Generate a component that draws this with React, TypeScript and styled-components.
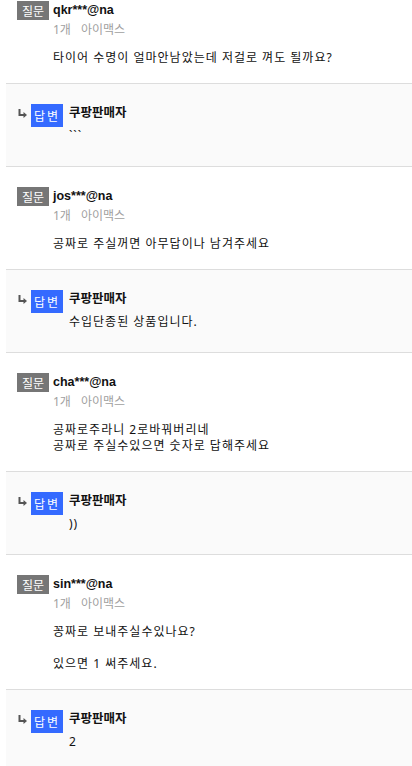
import styled, { createGlobalStyle } from "styled-components";

const GlobalStyle = createGlobalStyle`
  body {
    margin: 0;
    background: #fff;
    font-family: "Noto Sans", "Noto Sans CJK KR", sans-serif;
    color: #111;
  }
`;

const List = styled.div`
  margin-left: 6px;
  margin-top: -20px;
`;

const Question = styled.div`
  display: flex;
  border-top: 1px solid #dddddd;
  padding: 20px 0 17px 11px;
`;

const Answer = styled.div`
  display: flex;
  align-items: flex-start;
  border-top: 1px solid #dddddd;
  background: #fafafa;
  padding: 20px 0 22px 11px;
`;

const Badge = styled.span<{ $kind: "q" | "a" }>`
  flex: none;
  width: 32px;
  height: ${(p) => (p.$kind === "q" ? 19 : 23)}px;
  display: flex;
  align-items: center;
  justify-content: center;
  background: ${(p) => (p.$kind === "q" ? "#767676" : "#346aff")};
  color: #fff;
  font-size: 12px;
  letter-spacing: ${(p) => (p.$kind === "a" ? 2 : 0)}px;
`;

const Body = styled.div<{ $gap: number }>`
  margin-left: ${(p) => p.$gap}px;
  display: flex;
  flex-direction: column;
`;

const Writer = styled.div`
  font-family: "Liberation Sans", "Noto Sans CJK KR", sans-serif;
  font-size: 12.5px;
  font-weight: 700;
  line-height: 19px;
  color: #111;
`;

const Meta = styled.div`
  font-size: 12px;
  line-height: 16px;
  color: #a0a0a0;
  margin-top: 2px;

  span + span {
    margin-left: 10px;
  }
`;

const Text = styled.p<{ $top: number }>`
  margin: ${(p) => p.$top}px 0 0;
  font-size: 12px;
  letter-spacing: 1px;
  line-height: 16px;
  color: #111;
  white-space: pre-line;
`;

const Arrow = styled.svg`
  flex: none;
  width: 9px;
  height: 9px;
  margin: 5px 4px 0 1px;
`;

const ReplyArrow = () => (
  <Arrow viewBox="0 0 9 9">
    <path d="M1.5 0 V6 H6" stroke="#555" strokeWidth="2" fill="none" />
    <path d="M5.5 3 L9 6 L5.5 9 Z" fill="#555" />
  </Arrow>
);

type Item = { user: string; question: string; answer: string };

const items: Item[] = [
  {
    user: "qkr***@na",
    question: "타이어 수명이 얼마안남았는데 저걸로 껴도 될까요?",
    answer: "```",
  },
  {
    user: "jos***@na",
    question: "공짜로 주실꺼면 아무답이나 남겨주세요",
    answer: "수입단종된 상품입니다.",
  },
  {
    user: "cha***@na",
    question: "공짜로주라니 2로바꿔버리네\n공짜로 주실수있으면 숫자로 답해주세요",
    answer: "))",
  },
  {
    user: "sin***@na",
    question: "꽁짜로 보내주실수있나요?\n\n있으면 1 써주세요.",
    answer: "2",
  },
];

export default function App() {
  return (
    <>
      <GlobalStyle />
      <List>
        {items.map((item) => (
          <div key={item.user}>
            <Question>
              <Badge $kind="q">질문</Badge>
              <Body $gap={4}>
                <Writer>{item.user}</Writer>
                <Meta>
                  <span>1개</span>
                  <span>아이맥스</span>
                </Meta>
                <Text $top={12}>{item.question}</Text>
              </Body>
            </Question>
            <Answer>
              <ReplyArrow />
              <Badge $kind="a">답변</Badge>
              <Body $gap={6}>
                <Writer>쿠팡판매자</Writer>
                <Text $top={5}>{item.answer}</Text>
              </Body>
            </Answer>
          </div>
        ))}
      </List>
    </>
  );
}
